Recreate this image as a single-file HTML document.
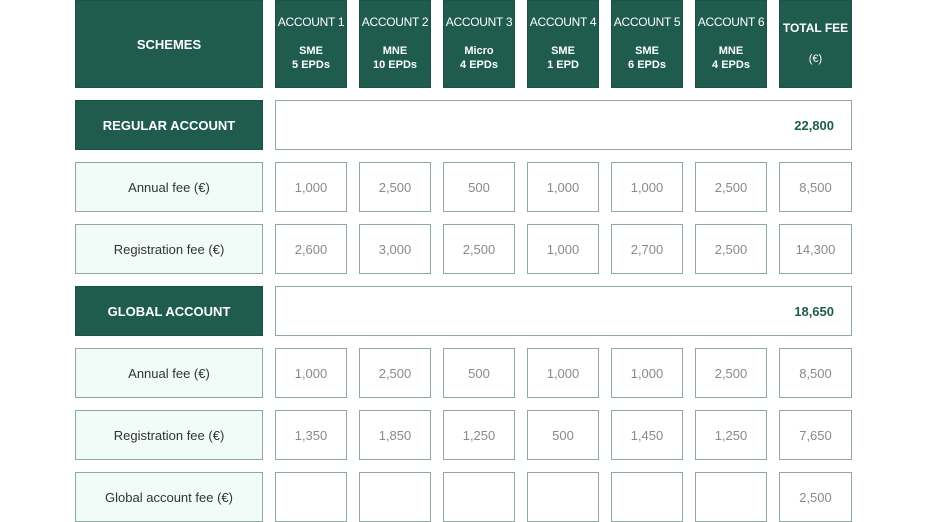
<!DOCTYPE html>
<html><head><meta charset="utf-8"><style>
body{margin:0;width:928px;height:522px;background:#fff;position:relative;overflow:hidden;font-family:"Liberation Sans",sans-serif}
.c{position:absolute;box-sizing:border-box;display:flex;align-items:center;justify-content:center;text-align:center;font-size:13px;color:#8a8a8a;border:1px solid #8fa9a0;background:#fff}
.d{background:#1f5c4d;color:#fff;font-weight:bold;border-color:#1a5244}
.l{background:#f1fbf7;color:#333}
.h{flex-direction:column;justify-content:flex-start;font-size:11px;line-height:14px}
</style></head><body>
<div id="g"></div>
<script>
const X=[275,359,443,527,611,695,779],W=[72,72,72,72,72,72,73];
let h='';
function c(x,y,w,hh,cls,t){h+=`<div class="c ${cls}" style="left:${x}px;top:${y}px;width:${w}px;height:${hh}px">${t}</div>`}
c(75,0,188,88,'d','SCHEMES');
const hd=[['SME','5 EPDs'],['MNE','10 EPDs'],['Micro','4 EPDs'],['SME','1 EPD'],['SME','6 EPDs'],['MNE','4 EPDs']];
hd.forEach((a,i)=>c(X[i],0,W[i],88,'d h',`<div style="margin-top:14px;font-weight:normal;font-size:12px;letter-spacing:-0.3px">ACCOUNT ${i+1}</div><div style="margin-top:15px">${a[0]}<br>${a[1]}</div>`));
c(779,0,73,88,'d h','<div style="margin-top:20px;font-size:12px">TOTAL FEE</div><div style="margin-top:17px;font-weight:normal">(€)</div>');
const rows=[
['REGULAR ACCOUNT','22,800'],
['Annual fee (€)',['1,000','2,500','500','1,000','1,000','2,500','8,500']],
['Registration fee (€)',['2,600','3,000','2,500','1,000','2,700','2,500','14,300']],
['GLOBAL ACCOUNT','18,650'],
['Annual fee (€)',['1,000','2,500','500','1,000','1,000','2,500','8,500']],
['Registration fee (€)',['1,350','1,850','1,250','500','1,450','1,250','7,650']],
['Global account fee (€)',['','','','','','','2,500']]];
rows.forEach((r,i)=>{const y=100+i*62;
if(typeof r[1]=='string'){c(75,y,188,50,'d',r[0]);h+=`<div class="c" style="left:275px;top:${y}px;width:577px;height:50px;justify-content:flex-end;padding-right:17px;color:#1f5c4d;font-weight:bold">${r[1]}</div>`}
else{c(75,y,188,50,'l',r[0]);r[1].forEach((v,j)=>c(X[j],y,W[j],50,'',v))}});
document.getElementById('g').innerHTML=h;
</script>
</body></html>
